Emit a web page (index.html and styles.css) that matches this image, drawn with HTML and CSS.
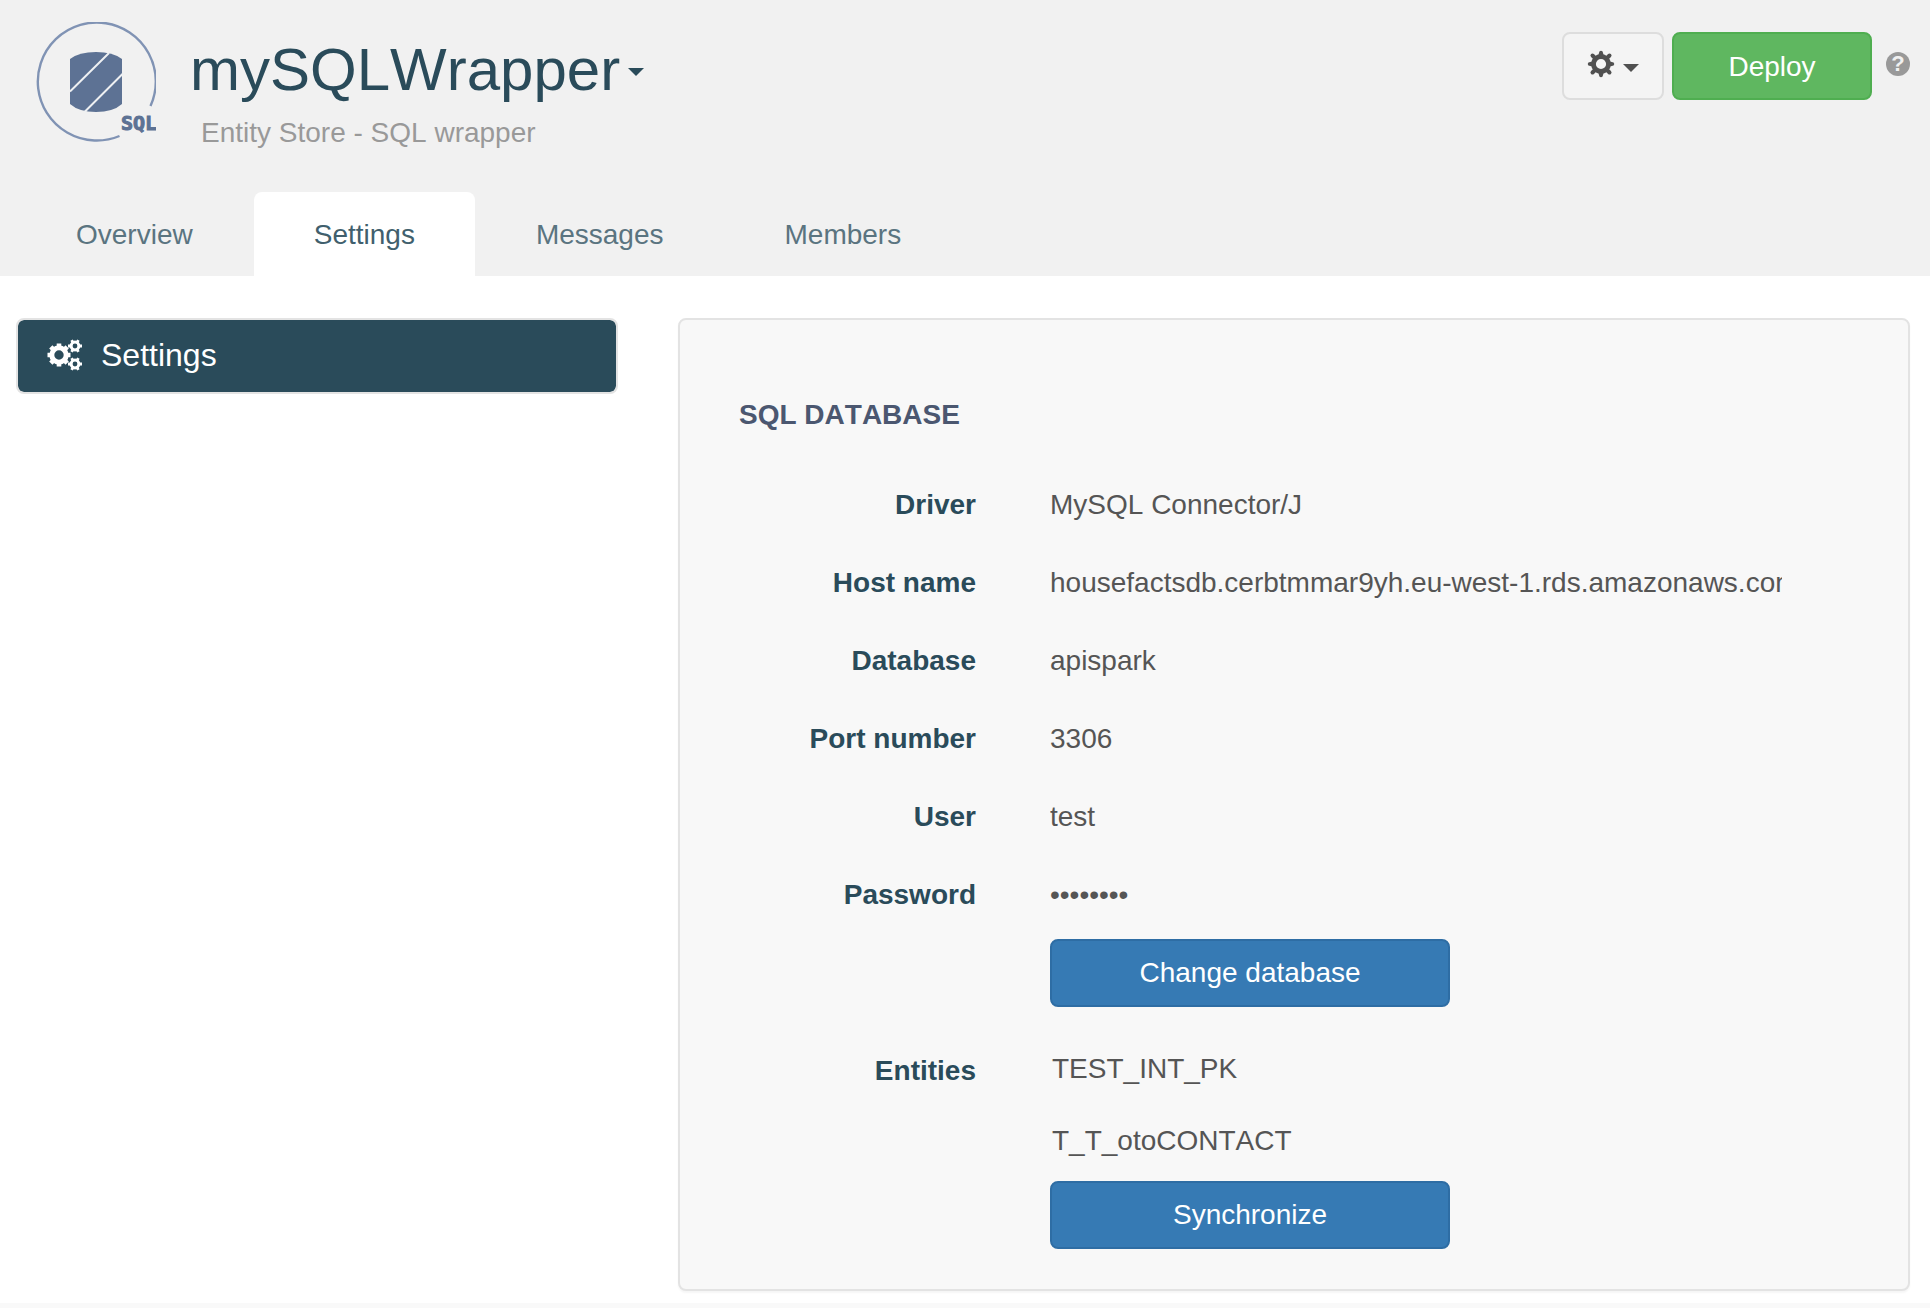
FILE: index.html
```html
<!DOCTYPE html>
<html lang="en">
<head>
<meta charset="utf-8">
<title>mySQLWrapper - Settings</title>
<link rel="stylesheet" href="styles.css">
</head>
<body>
<header class="header">
  <div class="header-top">
    <svg class="logo" viewBox="0 0 120 120" role="img" aria-label="SQL wrapper">
      <path d="M114.500 84A59 59 0 1 0 83.500 114" fill="none" stroke="#8093b4" stroke-width="2.400"/>
      <path d="M34 37Q43 30 60 30T86 37V82Q77 90 60 90T34 82Z" fill="#5d7294"/>
      <path d="M34 69.500L73 31M48.500 90L87 51.500" stroke="#eef0f2" stroke-width="2"/>
      <text class="logo-text" x="85" y="108">SQL</text>
    </svg>
    <div class="titles">
      <h1 class="title"><button class="title-button" type="button">mySQLWrapper<span class="caret"></span></button></h1>
      <p class="subtitle">Entity Store - SQL wrapper</p>
    </div>
    <div class="actions">
      <button class="button button-plain" type="button" aria-label="Options">
        <svg class="gear" viewBox="-14 -14 28 28" aria-hidden="true">
          <circle r="7.500" fill="none" stroke="currentColor" stroke-width="4.800"/>
          <path d="M-2.600-9L-1.600-12.600Q0-14 1.600-12.600L2.600-9ZM-2.600 9L-1.600 12.600Q0 14 1.600 12.600L2.600 9ZM-9-2.600L-12.600-1.600Q-14 0-12.600 1.600L-9 2.600ZM9-2.600L12.600-1.600Q14 0 12.600 1.600L9 2.600Z" fill="currentColor"/>
          <path d="M6.500-6.500L8.500-8.500M-6.500-6.500L-8.500-8.500M6.500 6.500L8.500 8.500M-6.500 6.500L-8.500 8.500" stroke="currentColor" stroke-width="4" stroke-linecap="round"/>
        </svg>
        <span class="caret"></span>
      </button>
      <button class="button button-deploy" type="button">Deploy</button>
      <a class="help" href="#help">?</a>
    </div>
  </div>
  <nav class="tabs">
    <a class="tab" href="#overview">Overview</a>
    <a class="tab tab-active" href="#settings">Settings</a>
    <a class="tab" href="#messages">Messages</a>
    <a class="tab" href="#members">Members</a>
  </nav>
</header>
<main class="main">
  <nav class="sidebar">
    <a class="sidebar-item" href="#settings">
      <svg class="cogs" viewBox="0 0 36 32" aria-hidden="true">
        <g fill="none" stroke="#fff">
          <g transform="translate(12 16)">
            <circle r="7.200" stroke-width="5"/>
            <path d="M0-8V-11.500M0 8V11.500M-8 0H-11.500M8 0H11.500M5.700-5.700L8.200-8.200M-5.700-5.700L-8.200-8.200M5.700 5.700L8.200 8.200M-5.700 5.700L-8.200 8.200" stroke-width="4.600"/>
          </g>
          <g transform="translate(28 7)">
            <circle r="3.900" stroke-width="3"/>
            <path d="M-4 0H-7M4 0H7M2.200-3.800L3.400-5.900M-2.200-3.800L-3.400-5.900M2.200 3.800L3.400 5.900M-2.200 3.800L-3.400 5.900" stroke-width="2.800"/>
          </g>
          <g transform="translate(28 25)">
            <circle r="3.900" stroke-width="3"/>
            <path d="M-4 0H-7M4 0H7M2.200-3.800L3.400-5.900M-2.200-3.800L-3.400-5.900M2.200 3.800L3.400 5.900M-2.200 3.800L-3.400 5.900" stroke-width="2.800"/>
          </g>
        </g>
      </svg>
      Settings
    </a>
  </nav>
  <section class="panel">
    <h2 class="panel-title">SQL DATABASE</h2>
    <form class="form">
      <label class="label" for="driver">Driver</label>
      <input class="value" id="driver" type="text" value="MySQL Connector/J" readonly>
      <label class="label" for="host">Host name</label>
      <input class="value" id="host" type="text" value="housefactsdb.cerbtmmar9yh.eu-west-1.rds.amazonaws.com" readonly>
      <label class="label" for="database">Database</label>
      <input class="value" id="database" type="text" value="apispark" readonly>
      <label class="label" for="port">Port number</label>
      <input class="value" id="port" type="text" value="3306" readonly>
      <label class="label" for="user">User</label>
      <input class="value" id="user" type="text" value="test" readonly>
      <label class="label" for="password">Password</label>
      <input class="value" id="password" type="password" value="password" readonly>
      <button class="button button-primary" type="button">Change database</button>
      <span class="label label-entities" id="entities">Entities</span>
      <div class="entities">
        <ul class="entity-list" aria-labelledby="entities">
          <li>TEST_INT_PK</li>
          <li>T_T_otoCONTACT</li>
        </ul>
        <button class="button button-primary" type="button">Synchronize</button>
      </div>
    </form>
  </section>
</main>
<footer class="footer"></footer>
</body>
</html>
```
FILE: styles.css
```css
* {
  box-sizing: border-box;
}

body {
  display: flex;
  flex-direction: column;
  min-height: 100vh;
  margin: 0;
  background: #fff;
  color: #555;
  font-family: "Liberation Sans", Arial, sans-serif;
  font-kerning: none;
  font-size: 28px;
  line-height: 40px;
}

a {
  text-decoration: none;
}

button,
input {
  font: inherit;
  font-kerning: inherit;
}

h1,
h2,
p,
ul {
  margin: 0;
  padding: 0;
}

.header {
  background: #f1f1f1;
}

.header-top {
  display: flex;
  align-items: flex-start;
  min-height: 192px;
  padding: 22px 20px 0 36px;
}

.logo {
  flex: none;
  width: 120px;
  height: 120px;
}

.logo-text {
  fill: #5d7294;
  stroke: #5d7294;
  stroke-width: 1px;
  font: bold 20px "DejaVu Sans Mono", monospace;
}

.titles {
  padding: 14px 0 0 34px;
}

.title {
  font-size: 60px;
  font-weight: normal;
  line-height: 68px;
}

.title-button {
  display: flex;
  align-items: center;
  gap: 8px;
  padding: 0;
  border: 0;
  background: none;
  color: #2a4b5a;
}

.title-button .caret {
  margin-top: 4px;
}

.subtitle {
  padding: 9px 0 0 11px;
  color: #999;
}

.caret {
  border: 8px solid transparent;
  border-top-color: currentColor;
  border-bottom: 0;
}

.actions {
  display: flex;
  align-items: center;
  gap: 8px;
  margin: 10px 0 0 auto;
}

.button {
  display: flex;
  align-items: center;
  justify-content: center;
  height: 68px;
  padding: 2px 0 0;
  border: 2px solid;
  border-radius: 8px;
  color: #fff;
}

.button-plain {
  gap: 8px;
  width: 102px;
  padding: 0;
  background: #f4f4f4;
  border-color: #ddd;
  color: #505050;
}

.gear {
  width: 28px;
  height: 28px;
  margin-bottom: 4px;
}

.button-plain .caret {
  margin-top: 4px;
}

.button-deploy {
  width: 200px;
  background: #5fb760;
  border-color: #4fae50;
}

.button-primary {
  grid-column: 2;
  width: 400px;
  padding: 0;
  background: #367ab4;
  border-color: #2e6da4;
}

.help {
  width: 24px;
  height: 24px;
  margin: 0 0 4px 6px;
  border-radius: 50%;
  background: #999;
  color: #f1f1f1;
  font-size: 22px;
  font-weight: bold;
  line-height: 24px;
  text-align: center;
}

.tabs {
  display: flex;
  gap: 1px;
  padding-left: 16px;
}

.tab {
  padding: 23px 60px 21px;
  color: #5a7480;
}

.tab-active {
  border-radius: 8px 8px 0 0;
  background: #fff;
  color: #415f6d;
}

.main {
  display: grid;
  grid-template-columns: 602fr 1232fr;
  gap: 60px;
  align-items: start;
  padding: 42px 20px 12px 16px;
}

.sidebar-item {
  display: flex;
  align-items: center;
  gap: 18px;
  height: 76px;
  padding: 0 29px 2px;
  border: 2px solid #e3e3e3;
  border-radius: 8px;
  background: #2a4b5a;
  background-clip: padding-box;
  color: #fff;
  font-size: 32px;
}

.cogs {
  width: 36px;
  height: 32px;
}

.panel {
  padding: 75px 126px 40px 59px;
  border: 2px solid #e3e3e3;
  border-radius: 8px;
  background: #f8f8f8;
  box-shadow: 0 2px 2px rgba(0, 0, 0, 0.04);
}

.panel-title {
  margin-bottom: 36px;
  color: #4b5770;
  font-size: 28px;
}

.form {
  display: grid;
  grid-template-columns: 237px minmax(0, 1fr);
  gap: 10px 74px;
}

.label {
  color: #2a4b5a;
  font-weight: bold;
  line-height: 68px;
  text-align: right;
}

.value {
  width: 100%;
  height: 68px;
  padding: 0;
  border: 0;
  outline: 0;
  background: none;
  color: #555;
}

.label-entities {
  margin-top: 20px;
}

.entities {
  margin-top: 16px;
}

.entity-list {
  padding: 0 0 4px 2px;
  line-height: 72px;
  list-style: none;
}

.footer {
  flex: 1;
  min-height: 5px;
  background: #f9f9f9;
}
```
